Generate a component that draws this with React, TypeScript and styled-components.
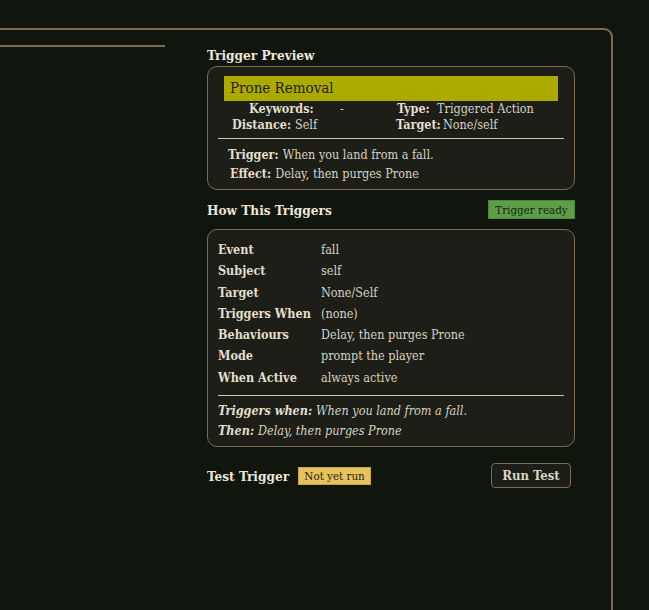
import React from "react";
import styled, { createGlobalStyle } from "styled-components";

const Global = createGlobalStyle`
  html, body {
    margin: 0;
    padding: 0;
    background: #10150e;
    overflow: hidden;
  }
  body {
    font-family: "DejaVu Serif", "Liberation Serif", serif;
    font-stretch: condensed;
    color: #dcd8c3;
  }
`;

const Page = styled.div`
  padding-top: 28px;
  height: 610px;
  box-sizing: border-box;
  overflow: hidden;
`;

const Frame = styled.div`
  margin-left: -12px;
  width: 625px;
  min-height: 620px;
  box-sizing: border-box;
  border: 2px solid #7d6a52;
  border-radius: 9px;
  padding: 15px 36px 0 0;
  display: grid;
  grid-template-columns: 175px 368px;
  column-gap: 42px;
  align-items: start;
`;

const SideRule = styled.div`
  border-top: 2px solid #7d6a52;
`;

const Column = styled.div`
  display: flex;
  flex-direction: column;
  padding-top: 2px;
`;

const Title = styled.h2`
  margin: 0;
  font-size: 13.5px;
  line-height: 16px;
  font-weight: 700;
  color: #ece8d5;
  white-space: nowrap;
`;

const Card = styled.div<{ $pad: string }>`
  background: #1e1e19;
  border: 1px solid #7d6a52;
  border-radius: 10px;
  padding: ${(p) => p.$pad};
`;

const Banner = styled.div`
  height: 25px;
  line-height: 25px;
  background: #abaa00;
  color: #1d1d10;
  font-size: 15px;
  padding-left: 6px;
`;

const MetaRow = styled.div`
  display: grid;
  grid-template-columns: 1fr 1fr;
  font-size: 12.5px;
  line-height: 16px;
`;

const MetaCell = styled.div<{ $pad: number }>`
  display: flex;
  padding-left: ${(p) => p.$pad}px;
  white-space: nowrap;
`;

const MetaLabel = styled.span<{ $w: number }>`
  font-weight: 700;
  color: #e3dfca;
  width: ${(p) => p.$w}px;
  flex: none;
`;

const Value = styled.span`
  color: #d6d2bf;
`;

const Rule = styled.div<{ $bleed: number; $top: number }>`
  height: 1px;
  background: #c9c6ad;
  margin: ${(p) => p.$top}px -${(p) => p.$bleed}px 0;
`;

const Gap = styled.div<{ $h: number }>`
  height: ${(p) => p.$h}px;
`;

const TextLine = styled.div<{ $indent: number }>`
  font-size: 12.5px;
  line-height: 19px;
  padding-left: ${(p) => p.$indent}px;
  white-space: nowrap;
`;

const Strong = styled.span`
  font-weight: 700;
  color: #e3dfca;
  margin-right: 4px;
`;

const HeadRow = styled.div`
  display: flex;
  align-items: center;
  justify-content: space-between;
  margin: 10px 0;
`;

const Badge = styled.span<{ $bg: string; $fg: string; $w: number; $h: number }>`
  display: inline-flex;
  align-items: center;
  justify-content: center;
  width: ${(p) => p.$w}px;
  height: ${(p) => p.$h}px;
  background: ${(p) => p.$bg};
  color: ${(p) => p.$fg};
  font-size: 11.5px;
  box-sizing: border-box;
  border: 1px solid rgba(0, 0, 0, 0.15);
`;

const Facts = styled.div`
  display: grid;
  grid-template-columns: 103px 1fr;
  font-size: 12.5px;
  line-height: 21.3px;
`;

const FactLabel = styled.span`
  font-weight: 700;
  color: #e3dfca;
  white-space: nowrap;
`;

const Summary = styled.div`
  font-style: italic;
  font-size: 12.5px;
  line-height: 20px;
  color: #d6d2bf;
`;

const TestRow = styled.div`
  display: flex;
  align-items: center;
  gap: 9px;
  margin-top: 16px;
  padding-right: 4px;
`;

const RunButton = styled.button`
  margin-left: auto;
  width: 80px;
  height: 25px;
  background: #1e1e19;
  border: 1px solid #7d6a52;
  border-radius: 4px;
  color: #d9d5c0;
  font-family: inherit;
  font-stretch: condensed;
  font-weight: 700;
  font-size: 13px;
  padding: 0;
`;

const facts: [string, string][] = [
  ["Event", "fall"],
  ["Subject", "self"],
  ["Target", "None/Self"],
  ["Triggers When", "(none)"],
  ["Behaviours", "Delay, then purges Prone"],
  ["Mode", "prompt the player"],
  ["When Active", "always active"],
];

export default function App() {
  return (
    <>
      <Global />
      <Page>
        <Frame>
          <SideRule />
          <Column>
            <Title>Trigger Preview</Title>
            <Card $pad="9px 16px 6px" style={{ marginTop: 3 }}>
              <Banner>Prone Removal</Banner>
              <MetaRow>
                <MetaCell $pad={25}>
                  <MetaLabel $w={91}>Keywords:</MetaLabel>
                  <Value>-</Value>
                </MetaCell>
                <MetaCell $pad={6}>
                  <MetaLabel $w={40}>Type:</MetaLabel>
                  <Value>Triggered Action</Value>
                </MetaCell>
              </MetaRow>
              <MetaRow>
                <MetaCell $pad={8}>
                  <MetaLabel $w={63}>Distance:</MetaLabel>
                  <Value>Self</Value>
                </MetaCell>
                <MetaCell $pad={5}>
                  <MetaLabel $w={47}>Target:</MetaLabel>
                  <Value>None/self</Value>
                </MetaCell>
              </MetaRow>
              <Rule $bleed={6} $top={5} />
              <Gap $h={6} />
              <TextLine $indent={4}>
                <Strong>Trigger:</Strong>
                <Value>When you land from a fall.</Value>
              </TextLine>
              <TextLine $indent={6}>
                <Strong>Effect:</Strong>
                <Value>Delay, then purges Prone</Value>
              </TextLine>
            </Card>

            <HeadRow>
              <Title>How This Triggers</Title>
              <Badge $bg="#5d9e46" $fg="#182812" $w={87} $h={19}>
                Trigger ready
              </Badge>
            </HeadRow>

            <Card $pad="9px 10px 5px">
              <Facts>
                {facts.map(([k, v]) => (
                  <React.Fragment key={k}>
                    <FactLabel>{k}</FactLabel>
                    <Value>{v}</Value>
                  </React.Fragment>
                ))}
              </Facts>
              <Rule $bleed={0} $top={7} />
              <Gap $h={5} />
              <Summary>
                <Strong>Triggers when:</Strong>When you land from a fall.
              </Summary>
              <Summary>
                <Strong>Then:</Strong>Delay, then purges Prone
              </Summary>
            </Card>

            <TestRow>
              <Title>Test Trigger</Title>
              <Badge $bg="#e6c35c" $fg="#2a2410" $w={73} $h={18}>
                Not yet run
              </Badge>
              <RunButton>Run Test</RunButton>
            </TestRow>
          </Column>
        </Frame>
      </Page>
    </>
  );
}
